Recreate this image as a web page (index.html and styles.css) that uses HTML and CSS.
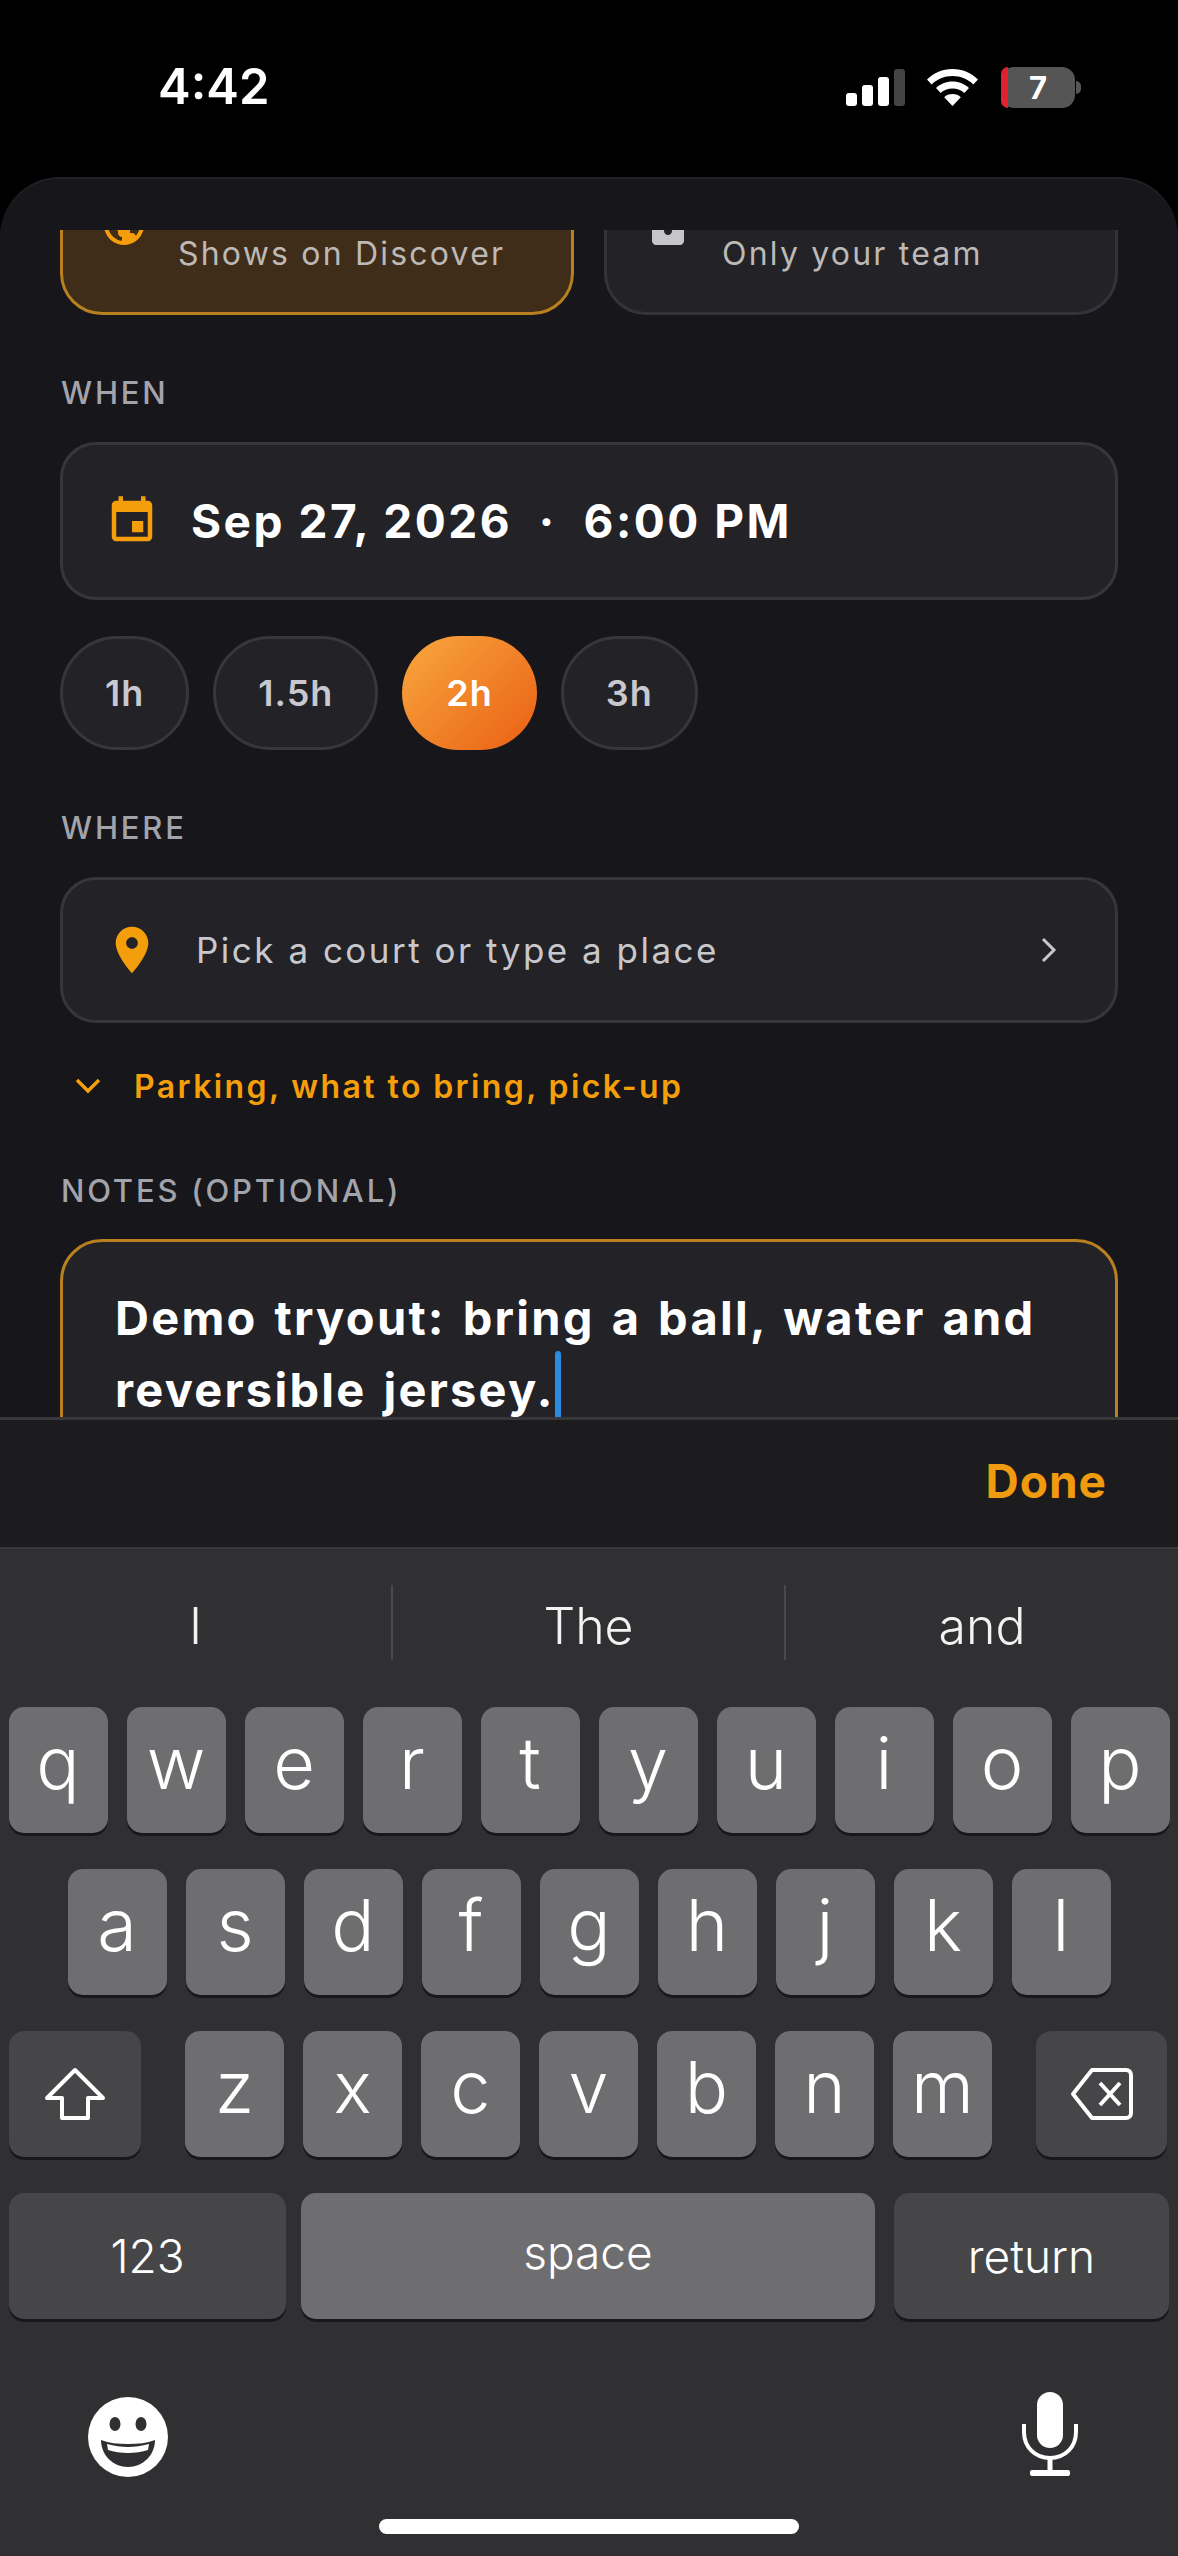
FILE: index.html

```html
<!DOCTYPE html>
<html lang="en">
<head>
    <meta charset="UTF-8">
    <meta name="viewport" content="width=device-width, initial-scale=1.0">
    <title>New tryout</title>
    <link rel="stylesheet" href="styles.css">
</head>
<body>
    <div class="phone">
        <div class="status-bar">
            <span class="time">4:42</span>
            <div class="status-icons">
                <div class="signal">
                    <i class="bar bar-1"></i>
                    <i class="bar bar-2"></i>
                    <i class="bar bar-3"></i>
                    <i class="bar bar-4"></i>
                </div>
                <svg class="wifi" viewBox="0 0 51 37">
                    <path fill="#fff" d="M25.5 0C15.500 0 6.800 4 0 10.500l4.600 5C10 10.200 17.300 7 25.500 7s15.500 3.200 20.900 8.500l4.600-5C44.200 4 35.500 0 25.500 0z"/>
                    <path fill="#fff" d="M25.500 12.500c-6.500 0-12.200 2.500-16.500 6.500l4.700 5c3-2.900 7.100-4.500 11.800-4.500s8.800 1.600 11.800 4.500l4.700-5c-4.300-4-10-6.500-16.500-6.500z"/>
                    <path fill="#fff" d="M25.500 25c-3.300 0-6.200 1.200-8.300 3.200l8.300 8.800 8.300-8.800c-2.100-2-5-3.200-8.300-3.200z"/>
                </svg>
                <div class="battery">
                    <span class="battery-low"></span>
                    <span class="battery-num">7</span>
                    <span class="battery-nub"></span>
                </div>
            </div>
        </div>

        <div class="sheet">
            <div class="scroll">
                <div class="vis-row">
                    <div class="vis-card vis-active">
                        <svg class="icon-48 orange" viewBox="0 0 24 24"><path d="M12 2C6.480 2 2 6.480 2 12s4.480 10 10 10 10-4.480 10-10S17.520 2 12 2zm-1 17.930c-3.950-.490-7-3.850-7-7.930 0-.620.080-1.210.210-1.790L9 15v1c0 1.100.900 2 2 2v1.930zm6.900-2.540c-.260-.810-1-1.390-1.900-1.390h-1v-3c0-.550-.450-1-1-1H8v-2h2c.550 0 1-.450 1-1V7h2c1.100 0 2-.900 2-2v-.410c2.930 1.190 5 4.060 5 7.410 0 2.080-.800 3.970-2.100 5.390z"/></svg>
                        <span class="vis-sub">Shows on Discover</span>
                    </div>
                    <div class="vis-card">
                        <svg class="icon-48 grey" viewBox="0 0 24 24"><path d="M18 8h-1V6c0-2.760-2.240-5-5-5S7 3.240 7 6v2H6c-1.100 0-2 .900-2 2v10c0 1.100.900 2 2 2h12c1.100 0 2-.900 2-2V10c0-1.100-.900-2-2-2zm-6 9c-1.100 0-2-.900-2-2s.900-2 2-2 2 .900 2 2-.900 2-2 2zm3.100-9H8.900V6c0-1.710 1.390-3.100 3.100-3.100 1.710 0 3.100 1.390 3.100 3.100v2z"/></svg>
                        <span class="vis-sub">Only your team</span>
                    </div>
                </div>

                <div class="label">WHEN</div>
                <div class="field field-date">
                    <svg class="icon-54 orange" viewBox="0 0 24 24"><path d="M17 12h-5v5h5v-5zM16 1v2H8V1H6v2H5c-1.110 0-1.990.900-1.990 2L3 19c0 1.100.890 2 2 2h14c1.100 0 2-.900 2-2V5c0-1.100-.900-2-2-2h-1V1h-2zm3 18H5V8h14v11z"/></svg>
                    <span class="date-text">Sep 27, 2026 &nbsp;·&nbsp; 6:00 PM</span>
                </div>
                <div class="pills">
                    <span class="pill">1h</span>
                    <span class="pill">1.5h</span>
                    <span class="pill pill-on">2h</span>
                    <span class="pill">3h</span>
                </div>

                <div class="label">WHERE</div>
                <div class="field field-where">
                    <svg class="icon-56 orange" viewBox="0 0 24 24"><path d="M12 2C8.130 2 5 5.130 5 9c0 5.250 7 13 7 13s7-7.750 7-13c0-3.870-3.130-7-7-7zm0 9.500c-1.380 0-2.500-1.120-2.500-2.500s1.120-2.500 2.500-2.500 2.500 1.120 2.500 2.500-1.120 2.500-2.500 2.500z"/></svg>
                    <span class="where-text">Pick a court or type a place</span>
                    <svg class="chev-right" viewBox="0 0 18 26"><path d="M3 2l11 11L3 24" fill="none" stroke="#c8c8cc" stroke-width="3"/></svg>
                </div>

                <div class="more">
                    <svg class="chev-down" viewBox="0 0 26 16"><path d="M2 2l11 11L24 2" fill="none" stroke="#f59e0b" stroke-width="3.500"/></svg>
                    <span>Parking, what to bring, pick-up</span>
                </div>

                <div class="label label-notes">NOTES (OPTIONAL)</div>
                <div class="notes">Demo tryout: bring a ball, water and reversible jersey.<span class="caret"></span></div>
            </div>
        </div>

        <div class="toolbar"><span class="done">Done</span></div>

        <div class="keyboard">
            <div class="suggestions">
                <span class="suggestion">I</span>
                <span class="suggestion">The</span>
                <span class="suggestion">and</span>
            </div>
            <div class="rows">
                <div class="row">
                    <span class="key">q</span><span class="key">w</span><span class="key">e</span><span class="key">r</span><span class="key">t</span><span class="key">y</span><span class="key">u</span><span class="key">i</span><span class="key">o</span><span class="key">p</span>
                </div>
                <div class="row">
                    <span class="key">a</span><span class="key">s</span><span class="key">d</span><span class="key">f</span><span class="key">g</span><span class="key">h</span><span class="key">j</span><span class="key">k</span><span class="key">l</span>
                </div>
                <div class="row row-3">
                    <span class="key key-dark key-shift">
                        <svg class="shift-icon" viewBox="0 0 62 54"><path d="M31 3L3 31h15v20h26V31h15z" fill="none" stroke="#fff" stroke-width="4" stroke-linejoin="round"/></svg>
                    </span>
                    <div class="letters">
                        <span class="key">z</span><span class="key">x</span><span class="key">c</span><span class="key">v</span><span class="key">b</span><span class="key">n</span><span class="key">m</span>
                    </div>
                    <span class="key key-dark key-delete">
                        <svg class="delete-icon" viewBox="0 0 64 54"><path d="M22 3h34c3 0 5 2 5 5v38c0 3-2 5-5 5H22L3 27z" fill="none" stroke="#fff" stroke-width="4" stroke-linejoin="round"/><path d="M30 16l20 22M50 16L30 38" fill="none" stroke="#fff" stroke-width="4"/></svg>
                    </span>
                </div>
                <div class="row row-4">
                    <span class="key key-dark key-wide key-123">123</span>
                    <span class="key key-wide key-space">space</span>
                    <span class="key key-dark key-wide key-return">return</span>
                </div>
            </div>
            <div class="kb-footer">
                <svg class="emoji" viewBox="0 0 80 80">
                    <circle cx="40" cy="40" r="40" fill="#fff"/>
                    <ellipse cx="27" cy="27" rx="5.500" ry="7" fill="#303032"/>
                    <ellipse cx="53" cy="27" rx="5.500" ry="7" fill="#303032"/>
                    <path d="M13 43c8 3 17 4 27 4s19-1 27-4c0 15-12 27-27 27S13 58 13 43z" fill="#303032"/>
                    <path d="M19 47c7 2 14 3 21 3s14-1 21-3l-1 6c-6 2-13 3-20 3s-14-1-20-3z" fill="#fff"/>
                </svg>
                <svg class="mic" viewBox="0 0 60 84">
                    <rect x="17" y="0" width="26" height="56" rx="13" fill="#fff"/>
                    <path d="M4 32v8c0 15 11 26 26 26s26-11 26-26v-8" fill="none" stroke="#fff" stroke-width="4"/>
                    <path d="M30 66v12" stroke="#fff" stroke-width="5"/>
                    <rect x="10" y="78" width="40" height="6" rx="2" fill="#fff"/>
                </svg>
            </div>
            <div class="home-bar"></div>
        </div>
    </div>
</body>
</html>
```

FILE: styles.css

```css
* {
    box-sizing: border-box;
}

body {
    margin: 0;
    background: #000;
    font-family: Inter, 'Noto Sans', sans-serif;
    color: white;
}

.phone {
    width: 1178px;
    height: 2556px;
    display: flex;
    flex-direction: column;
    overflow: hidden;
}

/* status bar */
.status-bar {
    height: 177px;
    flex: none;
    display: flex;
    justify-content: space-between;
    align-items: flex-start;
    padding: 57px 103px 0 158px;
}

.time {
    font-size: 49px;
    line-height: 60px;
    font-weight: 600;
}

.status-icons {
    display: flex;
    align-items: flex-end;
    margin-top: 8px;
}

.signal {
    display: flex;
    align-items: flex-end;
    gap: 5px;
    height: 41px;
}

.bar {
    width: 11px;
    background: white;
    border-radius: 3px;
}

.bar-1 { height: 13px; }
.bar-2 { height: 21px; }
.bar-3 { height: 29px; }
.bar-4 { height: 37px; background: #444; }

.wifi {
    width: 51px;
    height: 37px;
    margin-left: 22px;
}

.battery {
    position: relative;
    width: 74px;
    height: 41px;
    margin-left: 23px;
    margin-bottom: -2px;
    background: #555;
    border-radius: 13px;
    overflow: visible;
    display: flex;
    align-items: center;
    justify-content: center;
}

.battery-low {
    position: absolute;
    left: 0;
    top: 0;
    width: 7px;
    height: 41px;
    background: #e5202e;
    border-radius: 13px 0 0 13px;
}

.battery-num {
    font-size: 31px;
    font-weight: 700;
}

.battery-nub {
    position: absolute;
    right: -6px;
    top: 14px;
    width: 5px;
    height: 13px;
    background: #555;
    border-radius: 0 6px 6px 0;
}

/* sheet */
.sheet {
    height: 1240px;
    flex: none;
    background: #16161b;
    border-top: 2px solid #212126;
    border-radius: 60px 60px 0 0;
    padding-top: 51px;
    overflow: hidden;
}

.scroll {
    height: 100%;
    padding: 0 60px;
    overflow: hidden;
}

.vis-row {
    display: grid;
    grid-template-columns: 514px 514px;
    gap: 30px;
    margin-top: -60px;
}

.vis-card {
    height: 145px;
    display: flex;
    align-items: flex-start;
    gap: 30px;
    padding: 28px 0 0 37px;
    background: #222227;
    border: 3px solid #33333a;
    border-radius: 0 0 42px 42px;
}

.vis-active {
    background: #3f2d1a;
    border-color: #b9801f;
}

.vis-sub {
    margin-top: 33px;
    font-size: 32px;
    line-height: 40px;
    letter-spacing: 2.200px;
    color: #bdb9b6;
    white-space: nowrap;
}

.icon-48 { width: 48px; height: 48px; flex: none; }
.icon-54 { width: 54px; height: 54px; flex: none; }
.icon-56 { width: 56px; height: 56px; flex: none; }
.orange { fill: #f59e0b; }
.grey { fill: #c5c5ca; }

.label {
    margin: 58px 0 29px 1px;
    font-size: 31px;
    line-height: 40px;
    font-weight: 500;
    letter-spacing: 2.800px;
    color: #a3a3ab;
}

.label-notes {
    margin: 65px 0 28px 1px;
}

.field {
    display: flex;
    align-items: center;
    width: 1058px;
    background: #222227;
    border: 3px solid #36363c;
    border-radius: 36px;
}

.field-date {
    height: 158px;
    padding-left: 42px;
    gap: 32px;
}

.date-text {
    font-size: 46px;
    font-weight: 700;
    letter-spacing: 2.500px;
    white-space: nowrap;
}

.pills {
    display: flex;
    gap: 24px;
    margin-top: 36px;
}

.pill {
    height: 114px;
    padding: 0 42px;
    display: flex;
    align-items: center;
    background: #222227;
    border: 3px solid #36363c;
    border-radius: 57px;
    font-size: 36px;
    font-weight: 600;
    letter-spacing: 1px;
    color: #c8c8ce;
}

.pill-on {
    border: 0;
    padding: 0 44px;
    background: linear-gradient(135deg, #f8a83e 0%, #ea5f14 100%);
    color: white;
}

.field-where {
    height: 146px;
    padding: 0 57px 0 41px;
    gap: 36px;
}

.where-text {
    flex: 1;
    font-size: 35px;
    letter-spacing: 2.500px;
    color: #c8c8cc;
}

.chev-right {
    width: 18px;
    height: 26px;
}

.more {
    display: flex;
    align-items: center;
    gap: 33px;
    height: 40px;
    margin: 43px 0 0 15px;
    font-size: 32px;
    font-weight: 600;
    letter-spacing: 2.400px;
    color: #f59e0b;
}

.chev-down {
    width: 26px;
    height: 16px;
}

.notes {
    width: 1058px;
    height: 300px;
    padding: 40px 52px;
    background: #222227;
    border: 3px solid #b9801f;
    border-radius: 42px;
    font-size: 47px;
    line-height: 72px;
    font-weight: 700;
    letter-spacing: 2.250px;
    word-spacing: 3.500px;
}

.caret {
    display: inline-block;
    position: relative;
    width: 6px;
    height: 0;
}

.caret::after {
    content: '';
    position: absolute;
    left: 0;
    bottom: -12px;
    width: 6px;
    height: 68px;
    background: #2a8be0;
    border-radius: 3px;
}

/* accessory bar */
.toolbar {
    height: 130px;
    flex: none;
    display: flex;
    align-items: center;
    justify-content: flex-end;
    padding: 0 71px 5px 0;
    background: #1c1c1e;
    border-top: 3px solid #38383a;
}

.done {
    font-size: 46px;
    font-weight: 700;
    letter-spacing: 1px;
    color: #f09a10;
}

/* keyboard */
.keyboard {
    flex: 1;
    background: #303032;
    border-top: 2px solid #38383a;
}

.suggestions {
    height: 158px;
    padding-top: 36px;
    display: grid;
    grid-template-columns: 391px 393px 394px;
    align-items: start;
}

.suggestion {
    height: 75px;
    display: flex;
    align-items: center;
    justify-content: center;
    padding-top: 6px;
    font-size: 50px;
    font-weight: 300;
    color: #f2f2f2;
    border-left: 2px solid #4a4a4c;
}

.suggestion:first-child {
    border-left: 0;
}

.rows {
    display: flex;
    flex-direction: column;
    gap: 36px;
}

.row {
    display: flex;
    justify-content: center;
    gap: 19px;
    height: 126px;
}

.key {
    width: 99px;
    height: 126px;
    flex: none;
    display: flex;
    align-items: center;
    justify-content: center;
    padding-bottom: 16px;
    background: #6e6e70;
    border-radius: 15px;
    box-shadow: 0 3px 0 #18181a;
    font-size: 72px;
    font-weight: 300;
    color: white;
}

.key-dark {
    background: #464648;
}

.row-3 {
    justify-content: flex-start;
    padding-left: 9px;
}

.letters {
    display: flex;
    gap: 19px;
    margin-left: 25px;
}

.key-shift {
    width: 132px;
    padding: 0;
}

.key-delete {
    width: 131px;
    margin-left: 25px;
    padding: 0;
}

.shift-icon {
    width: 62px;
    height: 54px;
}

.delete-icon {
    width: 64px;
    height: 54px;
}

.row-4 {
    justify-content: flex-start;
    padding-left: 9px;
    gap: 15px;
}

.key-wide {
    font-size: 46px;
    font-weight: 300;
    padding-bottom: 0;
}

.key-123 { width: 277px; }
.key-space { width: 574px; padding-bottom: 8px; }
.key-return { width: 275px; margin-left: 4px; }

.kb-footer {
    display: flex;
    justify-content: space-between;
    align-items: center;
    padding: 72px 98px 0 88px;
}

.emoji {
    width: 80px;
    height: 80px;
    margin-top: 6px;
}

.mic {
    width: 60px;
    height: 84px;
}

.home-bar {
    width: 420px;
    height: 15px;
    margin: 42px auto 0;
    background: white;
    border-radius: 8px;
}
```
